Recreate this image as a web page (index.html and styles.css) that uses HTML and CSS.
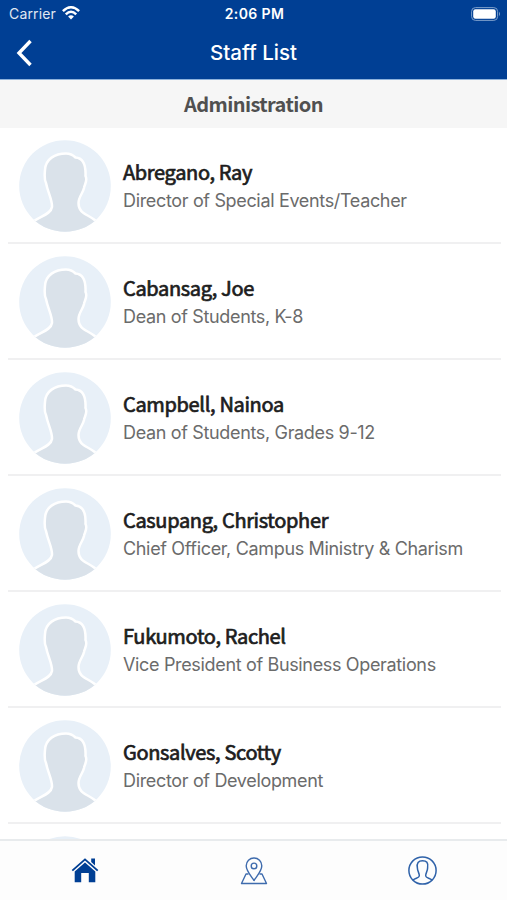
FILE: index.html
```html
<!DOCTYPE html>
<html lang="en">
<head>
<meta charset="utf-8">
<title>Staff List</title>
<link rel="stylesheet" href="styles.css">
</head>
<body>
<svg class="defs" aria-hidden="true">
  <symbol id="avatar" viewBox="0 0 92 92">
    <clipPath id="disc"><circle cx="46" cy="46" r="45.8"/></clipPath>
    <g clip-path="url(#disc)">
      <rect width="92" height="92" fill="#e8f0f8"/>
      <path d="M15 81C22 76 32 74 33 67C33.500 60 29 53 27 43C25 39 25.500 35 26 30C26.500 19 36 13.500 47 13.500C52 13.500 54 15 56.500 17.500C64 18 67 25 66.500 36C69 41 65.500 44 65 48C64 53 59.500 57 59.500 63C59.500 74 69 74 77 81V96H15Z" fill="#dae2ea" stroke="#fff" stroke-width="2.500"/>
    </g>
  </symbol>
</svg>
<div class="app">
  <header class="top">
    <div class="status">
      <div class="carrier"><span class="carrier-name">Carrier</span>
        <svg class="wifi" width="18" height="14" viewBox="0 0 18 14" fill="none" stroke="#fff" stroke-width="2.500"><path d="M.9 5.100Q9-2.500 17.100 5.100M3.800 8.300Q9 3.300 14.200 8.300"/><path d="M6.100 10.400Q9 7.900 11.900 10.400L9 13.400Z" fill="#fff" stroke="none"/></svg>
      </div>
      <div class="time">2:06 PM</div>
      <svg class="battery" width="30" height="14" viewBox="0 0 30 14"><rect x=".6" y=".6" width="26" height="12.800" rx="3.800" fill="none" stroke="#7d9fcb"/><rect x="2.200" y="2.200" width="22.600" height="9.600" rx="2.200" fill="#fff"/><path d="M28 4.800q2 2.200 0 4.400z" fill="#7d9fcb"/></svg>
    </div>
    <nav class="bar">
      <svg class="back" width="18" height="28" viewBox="0 0 18 28" fill="none" stroke="#fff" stroke-width="3.400"><path d="M15.500 2L4 14L15.500 26"/></svg>
      <h1 class="title">Staff List</h1>
    </nav>
  </header>
  <h2 class="section">Administration</h2>
  <main class="list">
    <article class="row"><svg class="avatar"><use href="#avatar"/></svg><div><h3 class="name">Abregano, Ray</h3><p class="role">Director of Special Events/Teacher</p></div></article>
    <article class="row"><svg class="avatar"><use href="#avatar"/></svg><div><h3 class="name">Cabansag, Joe</h3><p class="role">Dean of Students, K-8</p></div></article>
    <article class="row"><svg class="avatar"><use href="#avatar"/></svg><div><h3 class="name">Campbell, Nainoa</h3><p class="role">Dean of Students, Grades 9-12</p></div></article>
    <article class="row"><svg class="avatar"><use href="#avatar"/></svg><div><h3 class="name">Casupang, Christopher</h3><p class="role">Chief Officer, Campus Ministry &amp; Charism</p></div></article>
    <article class="row"><svg class="avatar"><use href="#avatar"/></svg><div><h3 class="name">Fukumoto, Rachel</h3><p class="role">Vice President of Business Operations</p></div></article>
    <article class="row"><svg class="avatar"><use href="#avatar"/></svg><div><h3 class="name">Gonsalves, Scotty</h3><p class="role">Director of Development</p></div></article>
    <article class="row"><svg class="avatar"><use href="#avatar"/></svg></article>
  </main>
  <nav class="tabs">
    <div class="tab"><svg width="28" height="28" viewBox="0 0 28 28" fill="#003f94"><path d="M20.200 1.500H24V8.500L20.200 5Z"/><path d="M1.300 13.600L14 2.400L26.700 13.600" fill="none" stroke="#003f94" stroke-width="1.900"/><path d="M14 5.600L24.300 14.400V25.300H17.800V16H10.200V25.300H3.700V14.400Z"/></svg></div>
    <div class="tab"><svg width="28" height="30" viewBox="0 0 28 30" fill="none" stroke="#3e6bad" stroke-width="1.400" stroke-linejoin="round"><path d="M14 24.500C11 20 6.200 15 6.200 9.800A7.800 7.800 0 0 1 21.800 9.800C21.800 15 17 20 14 24.500Z"/><circle cx="14" cy="9.900" r="2.800"/><path d="M8.500 18H6L1.500 27.500H26.500L22 18H19.500"/></svg></div>
    <div class="tab"><svg width="30" height="30" viewBox="0 0 30 30" fill="none" stroke="#2f62a9" stroke-width="1.500"><circle cx="14.500" cy="14.500" r="13.600"/><path d="M5 24C7.500 22 11 22 11.300 20C11.700 17.500 9.400 15.500 9.400 12C8.400 7 10.500 4.800 14.500 4.800C18.500 4.800 20.600 6.500 19.600 12C19.600 15.500 17.300 17.500 17.700 20C18 22 21.500 22 24 24"/></svg></div>
  </nav>
</div>
</body>
</html>
```

FILE: styles.css
```css
* { box-sizing: border-box; }
body { margin: 0; background: #fff; font-family: Inter, "Liberation Sans", sans-serif; }
h1, h2, h3, p { margin: 0; }
svg { display: block; flex: none; }
.defs { position: absolute; width: 0; height: 0; }
.app { width: 507px; height: 900px; display: flex; flex-direction: column; overflow: hidden; }
.top { flex: none; height: 80px; background: #003f94; color: #fff; border-bottom: 1px solid #8db2dc; }
.status { display: grid; grid-template-columns: 1fr auto 1fr; align-items: center; height: 27px; padding: 0 6px 0 9px; font-size: 14px; }
.carrier { display: flex; align-items: center; gap: 6px; color: #e0e8f2; letter-spacing: .15px; }
.wifi { margin-top: -2px; }
.time { margin-left: -1px; font-weight: 600; font-size: 14px; letter-spacing: .4px; }
.battery { justify-self: end; }
.bar { display: grid; grid-template-columns: 80px 1fr 80px; align-items: center; height: 51px; }
.back { margin-left: 15px; }
.title { text-align: center; font-size: 20.500px; font-weight: 500; line-height: 50px; }
.section { flex: none; height: 48px; background: #f6f6f6; color: #505050; text-align: center; letter-spacing: -.6px; font: 700 20px/48px "Noto Sans CJK SC", sans-serif; }
.list { flex: 1; min-height: 0; overflow: hidden; padding: 0 6px 0 8px; }
.row { height: 116px; display: flex; gap: 12px; padding: 12px 0 0 11px; border-bottom: 2px solid #f0f0f1; }
.avatar { width: 92px; height: 92px; }
.name { margin-top: 18px; height: 28px; color: #1d1d1d; font: 400 20px/28px "Noto Sans CJK SC", sans-serif; letter-spacing: -.34px; -webkit-text-stroke: .7px #1d1d1d; white-space: nowrap; }
.role { height: 26px; margin-top: 2px; line-height: 26px; font-size: 18px; letter-spacing: -.34px; color: #6b6b6b; white-space: nowrap; }
.tabs { flex: none; height: 61px; display: grid; grid-template-columns: repeat(3, 1fr); border-top: 2px solid #e8ebed; background: #fdfdfd; }
.tab { display: flex; align-items: center; justify-content: center; }
```
